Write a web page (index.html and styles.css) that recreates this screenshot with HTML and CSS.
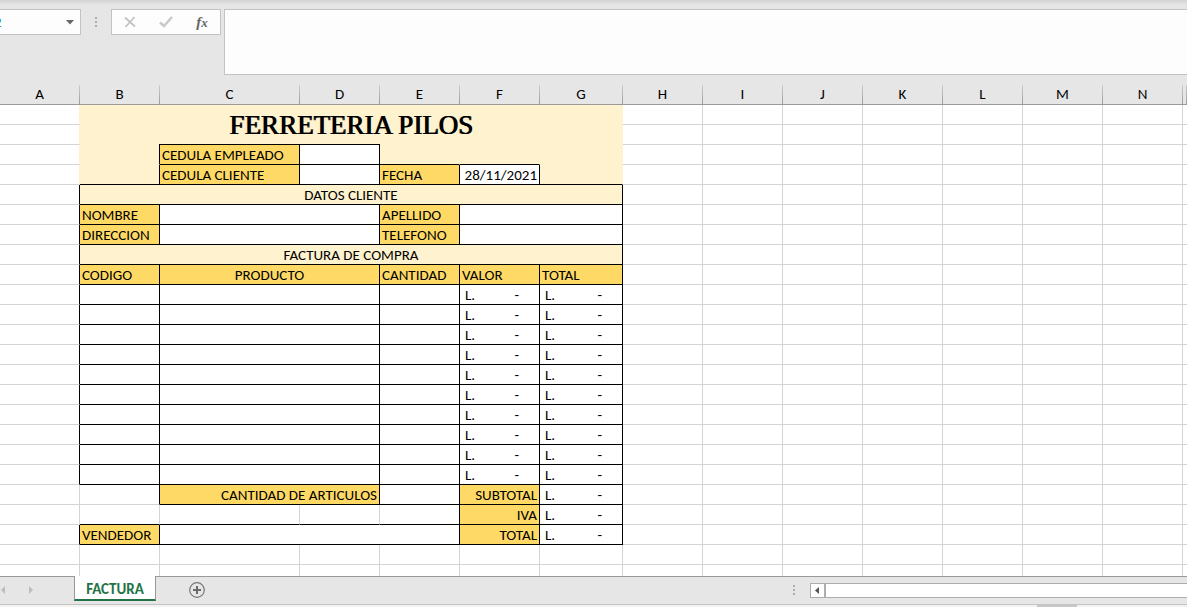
FILE: index.html
```html
<!DOCTYPE html>
<html lang="es">
<head>
<meta charset="utf-8">
<title>Factura</title>
<link rel="stylesheet" href="styles.css">
</head>
<body>
<header class="formula-bar">
  <div class="name-box">
    <input class="name-input" type="text" value="2" aria-label="Cuadro de nombres">
    <button class="icon-button" type="button" aria-label="Mostrar nombres"><svg width="8" height="5"><path d="M0 0h8L4 4.500z" fill="#666"/></svg></button>
  </div>
  <svg class="grip" width="3" height="11"><path d="M0 0h2v2H0zM0 4h2v2H0zM0 8h2v2H0z" fill="#adadad"/></svg>
  <div class="actions">
    <button class="icon-button" type="button" aria-label="Cancelar"><svg width="12" height="12" viewBox="0 0 12 12"><path d="M1 1.500 11 10.500M10.500 1 1.500 11" fill="none" stroke="#c3c3c3" stroke-width="1.800"/></svg></button>
    <button class="icon-button" type="button" aria-label="Introducir"><svg width="14" height="12" viewBox="0 0 14 12"><path d="M1 6.500 5 10 13 1" fill="none" stroke="#c8c8c8" stroke-width="2.500"/></svg></button>
    <button class="icon-button" type="button" aria-label="Insertar función"><span class="fx">f<span class="fx-small">x</span></span></button>
  </div>
  <textarea class="formula-input" aria-label="Barra de fórmulas"></textarea>
</header>

<main class="sheet">
<table class="grid">
  <colgroup>
    <col class="col"><col class="col"><col class="col-c"><col class="col"><col class="col"><col class="col"><col class="col-g">
    <col class="col"><col class="col"><col class="col"><col class="col"><col class="col"><col class="col"><col class="col"><col>
  </colgroup>
  <thead>
    <tr><th>A</th><th>B</th><th>C</th><th>D</th><th>E</th><th>F</th><th>G</th><th>H</th><th>I</th><th>J</th><th>K</th><th>L</th><th>M</th><th>N</th><th></th></tr>
  </thead>
  <tbody>
    <tr><td class="edge-cream"></td><td class="cream title" colspan="6" rowspan="2">FERRETERIA PILOS</td><td class="empty" colspan="8" rowspan="24"></td></tr>
    <tr><td class="edge-cream"></td></tr>
    <tr><td class="edge-cream"></td><td class="cream line-r"></td><td class="gold box top corner">CEDULA EMPLEADO</td><td class="box top"></td><td class="cream line-b"></td><td class="cream line-b"></td><td class="cream"></td></tr>
    <tr><td class="edge-cream"></td><td class="cream box"></td><td class="gold box">CEDULA CLIENTE</td><td class="box"></td><td class="gold box">FECHA</td><td class="box right">28/11/2021</td><td class="cream line-b"></td></tr>
    <tr><td class="line-r"></td><td class="cream box center" colspan="6">DATOS CLIENTE</td></tr>
    <tr><td class="line-r"></td><td class="gold box">NOMBRE</td><td class="box" colspan="2"></td><td class="gold box">APELLIDO</td><td class="box" colspan="2"></td></tr>
    <tr><td class="line-r"></td><td class="gold box">DIRECCION</td><td class="box" colspan="2"></td><td class="gold box">TELEFONO</td><td class="box" colspan="2"></td></tr>
    <tr><td class="line-r"></td><td class="cream box center" colspan="6">FACTURA DE COMPRA</td></tr>
    <tr><td class="line-r"></td><td class="gold box">CODIGO</td><td class="gold box center" colspan="2">PRODUCTO</td><td class="gold box">CANTIDAD</td><td class="gold box">VALOR</td><td class="gold box">TOTAL</td></tr>
    <tr><td class="line-r"></td><td class="box"></td><td class="box" colspan="2"></td><td class="box"></td><td class="box"><div class="money"><span>L.</span><span>-</span></div></td><td class="box"><div class="money"><span>L.</span><span>-</span></div></td></tr>
    <tr><td class="line-r"></td><td class="box"></td><td class="box" colspan="2"></td><td class="box"></td><td class="box"><div class="money"><span>L.</span><span>-</span></div></td><td class="box"><div class="money"><span>L.</span><span>-</span></div></td></tr>
    <tr><td class="line-r"></td><td class="box"></td><td class="box" colspan="2"></td><td class="box"></td><td class="box"><div class="money"><span>L.</span><span>-</span></div></td><td class="box"><div class="money"><span>L.</span><span>-</span></div></td></tr>
    <tr><td class="line-r"></td><td class="box"></td><td class="box" colspan="2"></td><td class="box"></td><td class="box"><div class="money"><span>L.</span><span>-</span></div></td><td class="box"><div class="money"><span>L.</span><span>-</span></div></td></tr>
    <tr><td class="line-r"></td><td class="box"></td><td class="box" colspan="2"></td><td class="box"></td><td class="box"><div class="money"><span>L.</span><span>-</span></div></td><td class="box"><div class="money"><span>L.</span><span>-</span></div></td></tr>
    <tr><td class="line-r"></td><td class="box"></td><td class="box" colspan="2"></td><td class="box"></td><td class="box"><div class="money"><span>L.</span><span>-</span></div></td><td class="box"><div class="money"><span>L.</span><span>-</span></div></td></tr>
    <tr><td class="line-r"></td><td class="box"></td><td class="box" colspan="2"></td><td class="box"></td><td class="box"><div class="money"><span>L.</span><span>-</span></div></td><td class="box"><div class="money"><span>L.</span><span>-</span></div></td></tr>
    <tr><td class="line-r"></td><td class="box"></td><td class="box" colspan="2"></td><td class="box"></td><td class="box"><div class="money"><span>L.</span><span>-</span></div></td><td class="box"><div class="money"><span>L.</span><span>-</span></div></td></tr>
    <tr><td class="line-r"></td><td class="box"></td><td class="box" colspan="2"></td><td class="box"></td><td class="box"><div class="money"><span>L.</span><span>-</span></div></td><td class="box"><div class="money"><span>L.</span><span>-</span></div></td></tr>
    <tr><td class="line-r"></td><td class="box"></td><td class="box" colspan="2"></td><td class="box"></td><td class="box"><div class="money"><span>L.</span><span>-</span></div></td><td class="box"><div class="money"><span>L.</span><span>-</span></div></td></tr>
    <tr><td></td><td class="line-r"></td><td class="gold box right" colspan="2">CANTIDAD DE ARTICULOS</td><td class="box"></td><td class="gold box right">SUBTOTAL</td><td class="box"><div class="money"><span>L.</span><span>-</span></div></td></tr>
    <tr><td></td><td class="line-b"></td><td class="line-b"></td><td class="line-b"></td><td class="box"></td><td class="gold box right">IVA</td><td class="box"><div class="money"><span>L.</span><span>-</span></div></td></tr>
    <tr><td class="line-r"></td><td class="gold box">VENDEDOR</td><td class="box" colspan="3"></td><td class="gold box right">TOTAL</td><td class="box"><div class="money"><span>L.</span><span>-</span></div></td></tr>
    <tr><td></td><td></td><td></td><td></td><td></td><td></td><td></td></tr>
    <tr><td></td><td></td><td></td><td></td><td></td><td></td><td></td></tr>
  </tbody>
</table>
</main>

<footer class="footer">
  <div class="tab-bar">
    <div class="tab-nav">
      <button class="icon-button" type="button" aria-label="Hoja anterior"><svg width="5" height="8"><path d="M5 0v8L1 4z" fill="#bdbdbd"/></svg></button>
      <button class="icon-button" type="button" aria-label="Hoja siguiente"><svg width="5" height="8"><path d="M0 0v8l4-4z" fill="#bdbdbd"/></svg></button>
    </div>
    <button class="tab" type="button">FACTURA</button>
    <button class="icon-button add" type="button" aria-label="Hoja nueva"><svg width="16" height="16" viewBox="0 0 16 16"><circle cx="8" cy="8" r="7.300" fill="none" stroke="#777" stroke-width="1.200"/><path d="M8 4v8M4 8h8" stroke="#6a6a6a" stroke-width="2"/></svg></button>
    <div class="scroll-area">
      <svg class="grip" width="3" height="11"><path d="M0 0h2v2H0zM0 4h2v2H0zM0 8h2v2H0z" fill="#adadad"/></svg>
      <div class="scrollbar">
        <button class="icon-button scroll-left" type="button" aria-label="Desplazar a la izquierda"><svg width="4" height="7"><path d="M4 0v7L0 3.500z" fill="#555"/></svg></button>
        <div class="scroll-thumb"></div>
      </div>
    </div>
  </div>
  <div class="status"><div class="status-mark"></div></div>
</footer>
</body>
</html>
```
FILE: styles.css
```css
* { box-sizing: border-box; }

body {
  margin: 0;
  height: 100vh;
  display: flex;
  flex-direction: column;
  overflow: hidden;
  background: #fff;
  color: #000;
  font: 15px/16px Calibri, Carlito, Lato, "Liberation Sans", sans-serif;
}

.icon-button {
  display: flex;
  align-items: center;
  justify-content: center;
  padding: 0;
  border: 0;
  background: none;
  font: inherit;
}

.grip { display: block; flex: none; }

/* Formula bar */
.formula-bar {
  display: flex;
  align-items: flex-start;
  flex: none;
  height: 85px;
  padding-top: 9px;
  background: linear-gradient(#d4d4d4, #e6e6e6 5px);
}

.name-box {
  display: flex;
  width: 81px;
  height: 26px;
  border: 1px solid #c3c3c3;
  border-left: 0;
  background: #fdfdfd;
}

.name-input {
  flex: 1;
  min-width: 0;
  padding: 0;
  border: 0;
  background: none;
  color: #2a8dcb;
  font: inherit;
  text-indent: -6px;
}

.name-box .icon-button { width: 20px; }

.formula-bar .grip { margin: 8px 13px 0 14px; }

.actions {
  display: flex;
  width: 110px;
  height: 26px;
  margin-right: 3px;
  border: 1px solid #c3c3c3;
  background: #fdfdfd;
}

.actions .icon-button { flex: 1; }

.fx {
  color: #666;
  font: italic bold 15px/18px "Liberation Serif", serif;
}

.fx-small { font-size: 13px; }

.formula-input {
  flex: 1;
  height: 66px;
  border: 1px solid #c3c3c3;
  border-right: 0;
  border-radius: 0;
  background: #fdfdfd;
  resize: none;
  outline: 0;
}

/* Sheet */
.sheet {
  flex: 1;
  min-height: 0;
  overflow: hidden;
}

.grid {
  width: 100%;
  table-layout: fixed;
  border-collapse: separate;
  border-spacing: 0;
}

.col { width: 80px; }
.col-c { width: 140px; }
.col-g { width: 83px; }

th {
  height: 20px;
  padding: 1px 0 2px;
  border-right: 1px solid;
  border-bottom: 1px solid #999;
  border-image: linear-gradient(#cfcfcf, #999) 1;
  background: #e6e6e6;
  font-weight: normal;
}

td {
  height: 20px;
  padding: 2px 2px 1px;
  border-right: 1px solid #d4d4d4;
  border-bottom: 1px solid #d4d4d4;
  white-space: nowrap;
}

.cream { background: #fff2cf; border-color: #fff2cf; }
.gold { background: #ffd966; }
.edge-cream { border-right-color: #fff2cf; }
.line-r { border-right-color: #000; }
.line-b { border-bottom-color: #000; }
.box { border-color: #000; }
.top { box-shadow: 0 -1px #000; }
.corner { box-shadow: 0 -1px #000, -1px -1px #000; }
.center { text-align: center; }
.right { text-align: right; }

.title {
  text-align: center;
  font: 27px/36px "Liberation Serif", serif;
  text-shadow: 1px 0 #000;
}

.empty {
  border: 0;
  background:
    repeating-linear-gradient(to right, transparent 0 79px, #d4d4d4 79px 80px),
    repeating-linear-gradient(to bottom, transparent 0 19px, #d4d4d4 19px 20px);
}

.money {
  display: flex;
  justify-content: space-between;
  padding: 0 18px 0 3px;
}

/* Sheet tabs and horizontal scroll */
.footer {
  flex: none;
  background: #e6e6e6;
}

.tab-bar {
  display: flex;
  height: 28px;
  border-top: 1px solid #999;
}

.tab-nav {
  display: flex;
  align-items: center;
  gap: 24px;
  width: 74px;
  height: 25px;
}

.tab {
  width: 82px;
  height: 25px;
  margin-top: -1px;
  padding: 2px 0 0;
  border: 1px solid #999;
  border-top: 0;
  border-bottom: 2px solid #217346;
  background: #fff;
  color: #217346;
  font: inherit;
  font-weight: bold;
}

.add { width: 16px; height: 26px; margin-left: 33px; }

.scroll-area {
  display: flex;
  align-items: center;
  width: 33.2%;
  height: 27px;
  margin-left: auto;
}

.scrollbar {
  display: flex;
  flex: 1;
  height: 15px;
  margin-left: 14px;
  border: 1px solid #adadad;
  border-right: 0;
  background: #fff;
}

.scroll-left { width: 13px; }
.scroll-thumb { flex: 1; border-left: 2px solid #adadad; }

.status {
  height: 3px;
  padding-right: 110px;
  border-top: 1px solid #c3c3c3;
  background: #f3f2f1;
}

.status-mark {
  width: 40px;
  height: 2px;
  margin-left: auto;
  background: #c8c8c8;
}
```
